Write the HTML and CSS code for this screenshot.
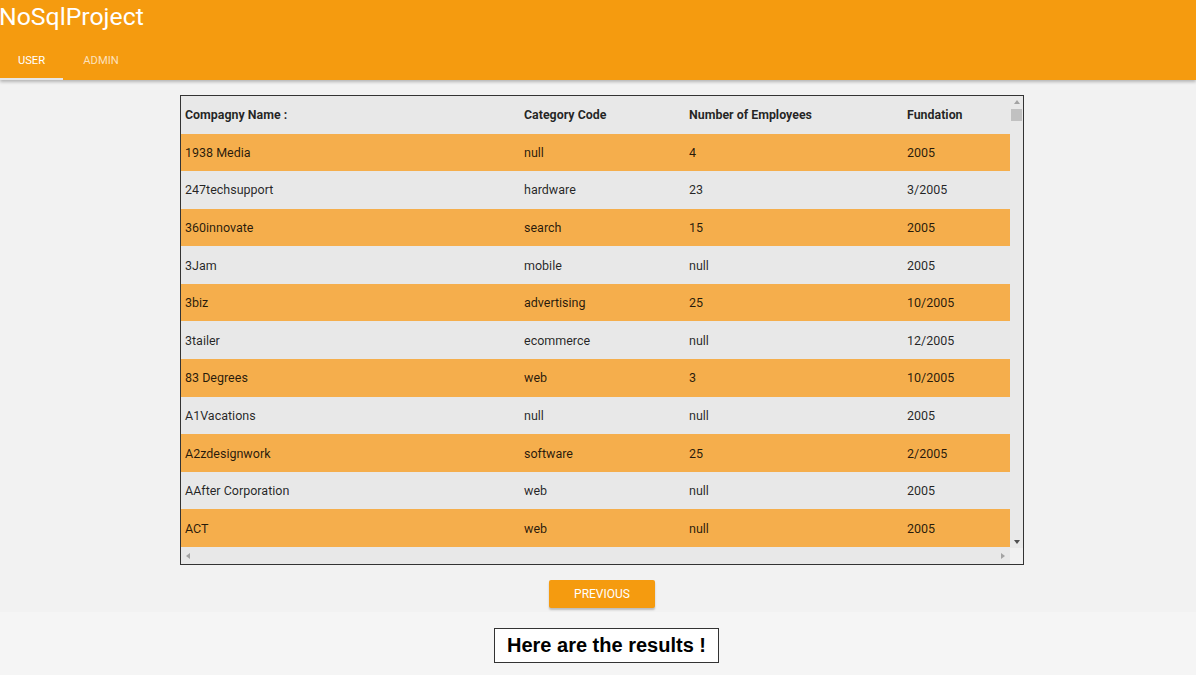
FILE: index.html
```html
<!DOCTYPE html>
<html>
<head>
<meta charset="utf-8">
<link rel="stylesheet" href="styles.css">
</head>
<body>
<header class="appbar">
  <div class="title">NoSqlProject</div>
  <nav class="tabs">
    <div class="tab active">USER</div>
    <div class="tab">ADMIN</div>
  </nav>
</header>
<main class="content">
  <div class="grid-wrap">
    <div class="viewport">
      <table class="grid">
        <colgroup>
          <col class="c1"><col class="c2"><col class="c3"><col class="c4">
        </colgroup>
        <thead>
          <tr><th>Compagny Name :</th><th>Category Code</th><th>Number of Employees</th><th>Fundation</th></tr>
        </thead>
        <tbody>
          <tr class="odd"><td>1938 Media</td><td>null</td><td>4</td><td>2005</td></tr>
          <tr><td>247techsupport</td><td>hardware</td><td>23</td><td>3/2005</td></tr>
          <tr class="odd"><td>360innovate</td><td>search</td><td>15</td><td>2005</td></tr>
          <tr><td>3Jam</td><td>mobile</td><td>null</td><td>2005</td></tr>
          <tr class="odd"><td>3biz</td><td>advertising</td><td>25</td><td>10/2005</td></tr>
          <tr><td>3tailer</td><td>ecommerce</td><td>null</td><td>12/2005</td></tr>
          <tr class="odd"><td>83 Degrees</td><td>web</td><td>3</td><td>10/2005</td></tr>
          <tr><td>A1Vacations</td><td>null</td><td>null</td><td>2005</td></tr>
          <tr class="odd"><td>A2zdesignwork</td><td>software</td><td>25</td><td>2/2005</td></tr>
          <tr><td>AAfter Corporation</td><td>web</td><td>null</td><td>2005</td></tr>
          <tr class="odd"><td>ACT</td><td>web</td><td>null</td><td>2005</td></tr>
        </tbody>
      </table>
    </div>
    <div class="vscroll">
      <span class="arrow up"></span>
      <span class="thumb"></span>
      <span class="spacer"></span>
      <span class="arrow down"></span>
    </div>
    <div class="hscroll">
      <span class="arrow left"></span>
      <span class="arrow right"></span>
    </div>
    <div class="corner"></div>
  </div>
  <button class="btn">PREVIOUS</button>
</main>
<footer class="results">
  <div class="results-box">Here are the results !</div>
</footer>
</body>
</html>
```
FILE: styles.css
```css
* { box-sizing: border-box; }
html, body { margin: 0; padding: 0; }
body {
  background: #f5f5f5;
  font-family: Roboto, "Noto Sans", sans-serif;
  width: 1196px;
  height: 675px;
  overflow: hidden;
}
.appbar {
  background: #f59b0f;
  height: 80px;
  color: #fff;
  box-shadow: 0 2px 3px rgba(0,0,0,0.25);
  position: relative;
  z-index: 1;
  display: flex;
  flex-direction: column;
  justify-content: space-between;
}
.title {
  font-size: 24.8px;
  line-height: 34px;
  margin-left: -1px;
}
.tabs { display: flex; }
.tab {
  font-size: 11.2px;
  height: 40px;
  line-height: 42px;
  text-align: center;
  color: rgba(255,255,255,0.72);
  border-bottom: 2px solid transparent;
}
.tab:first-child { width: 63px; }
.tab:nth-child(2) { width: 76px; }
.tab.active { color: #fff; border-bottom-color: #e6e6e6; }

.content {
  background: #f2f2f2;
  padding: 15px 0 4px 8px;
  display: flex;
  flex-direction: column;
  align-items: center;
}
.grid-wrap {
  width: 844px;
  height: 470px;
  border: 1px solid #333;
  display: grid;
  grid-template-columns: 1fr 13px;
  grid-template-rows: 1fr 16px;
  background: #e8e8e8;
}
.viewport { overflow: hidden; }
.grid {
  border-collapse: collapse;
  width: 829px;
  table-layout: fixed;
  font-size: 12.5px;
  color: rgba(0,0,0,0.85);
}
.c1 { width: 339px; }
.c2 { width: 165px; }
.c3 { width: 218px; }
.c4 { width: 107px; }
.grid th, .grid td {
  text-align: left;
  padding: 0 4px;
  white-space: nowrap;
  overflow: hidden;
}
.grid th {
  height: 37.5px;
  font-weight: 700;
  font-size: 12.4px;
  background: #e8e8e8;
}
.grid td { height: 37.6px; }
.grid tr { background: #e8e8e8; }
.grid tr.odd { background: #f5ae4c; }

.vscroll {
  display: flex;
  flex-direction: column;
  align-items: center;
  background: #e9e9e9;
  padding-top: 4px;
}
.thumb {
  width: 11px;
  height: 12px;
  background: #c1c1c1;
  margin-top: 5px;
}
.spacer { flex: 1; }
.arrow { width: 0; height: 0; display: block; }
.arrow.up {
  border-left: 3.5px solid transparent;
  border-right: 3.5px solid transparent;
  border-bottom: 4px solid #a3a3a3;
}
.arrow.down {
  border-left: 3.5px solid transparent;
  border-right: 3.5px solid transparent;
  border-top: 4px solid #505050;
  margin-bottom: 4px;
}
.hscroll {
  display: flex;
  justify-content: space-between;
  align-items: center;
  padding: 0 5px;
  background: #e8e8e8;
}
.arrow.left {
  border-top: 3.5px solid transparent;
  border-bottom: 3.5px solid transparent;
  border-right: 4px solid #a3a3a3;
}
.arrow.right {
  border-top: 3.5px solid transparent;
  border-bottom: 3.5px solid transparent;
  border-left: 4px solid #a3a3a3;
}
.corner { background: #f1f1f1; }

.btn {
  margin-top: 15px;
  width: 106px;
  height: 28px;
  border: none;
  border-radius: 2px;
  background: #f59b0f;
  color: #fff;
  font-family: Roboto, sans-serif;
  font-size: 12px;
  box-shadow: 0 2px 2px rgba(0,0,0,0.22);
  padding: 0;
}
.results {
  display: flex;
  justify-content: center;
  padding: 16px 0 0 17px;
}
.results-box {
  width: 225px;
  height: 35px;
  border: 1px solid #333;
  background: #fff;
  font-family: "Liberation Sans", Arial, sans-serif;
  font-weight: 700;
  font-size: 20px;
  line-height: 33px;
  text-align: center;
  color: #000;
}
```
